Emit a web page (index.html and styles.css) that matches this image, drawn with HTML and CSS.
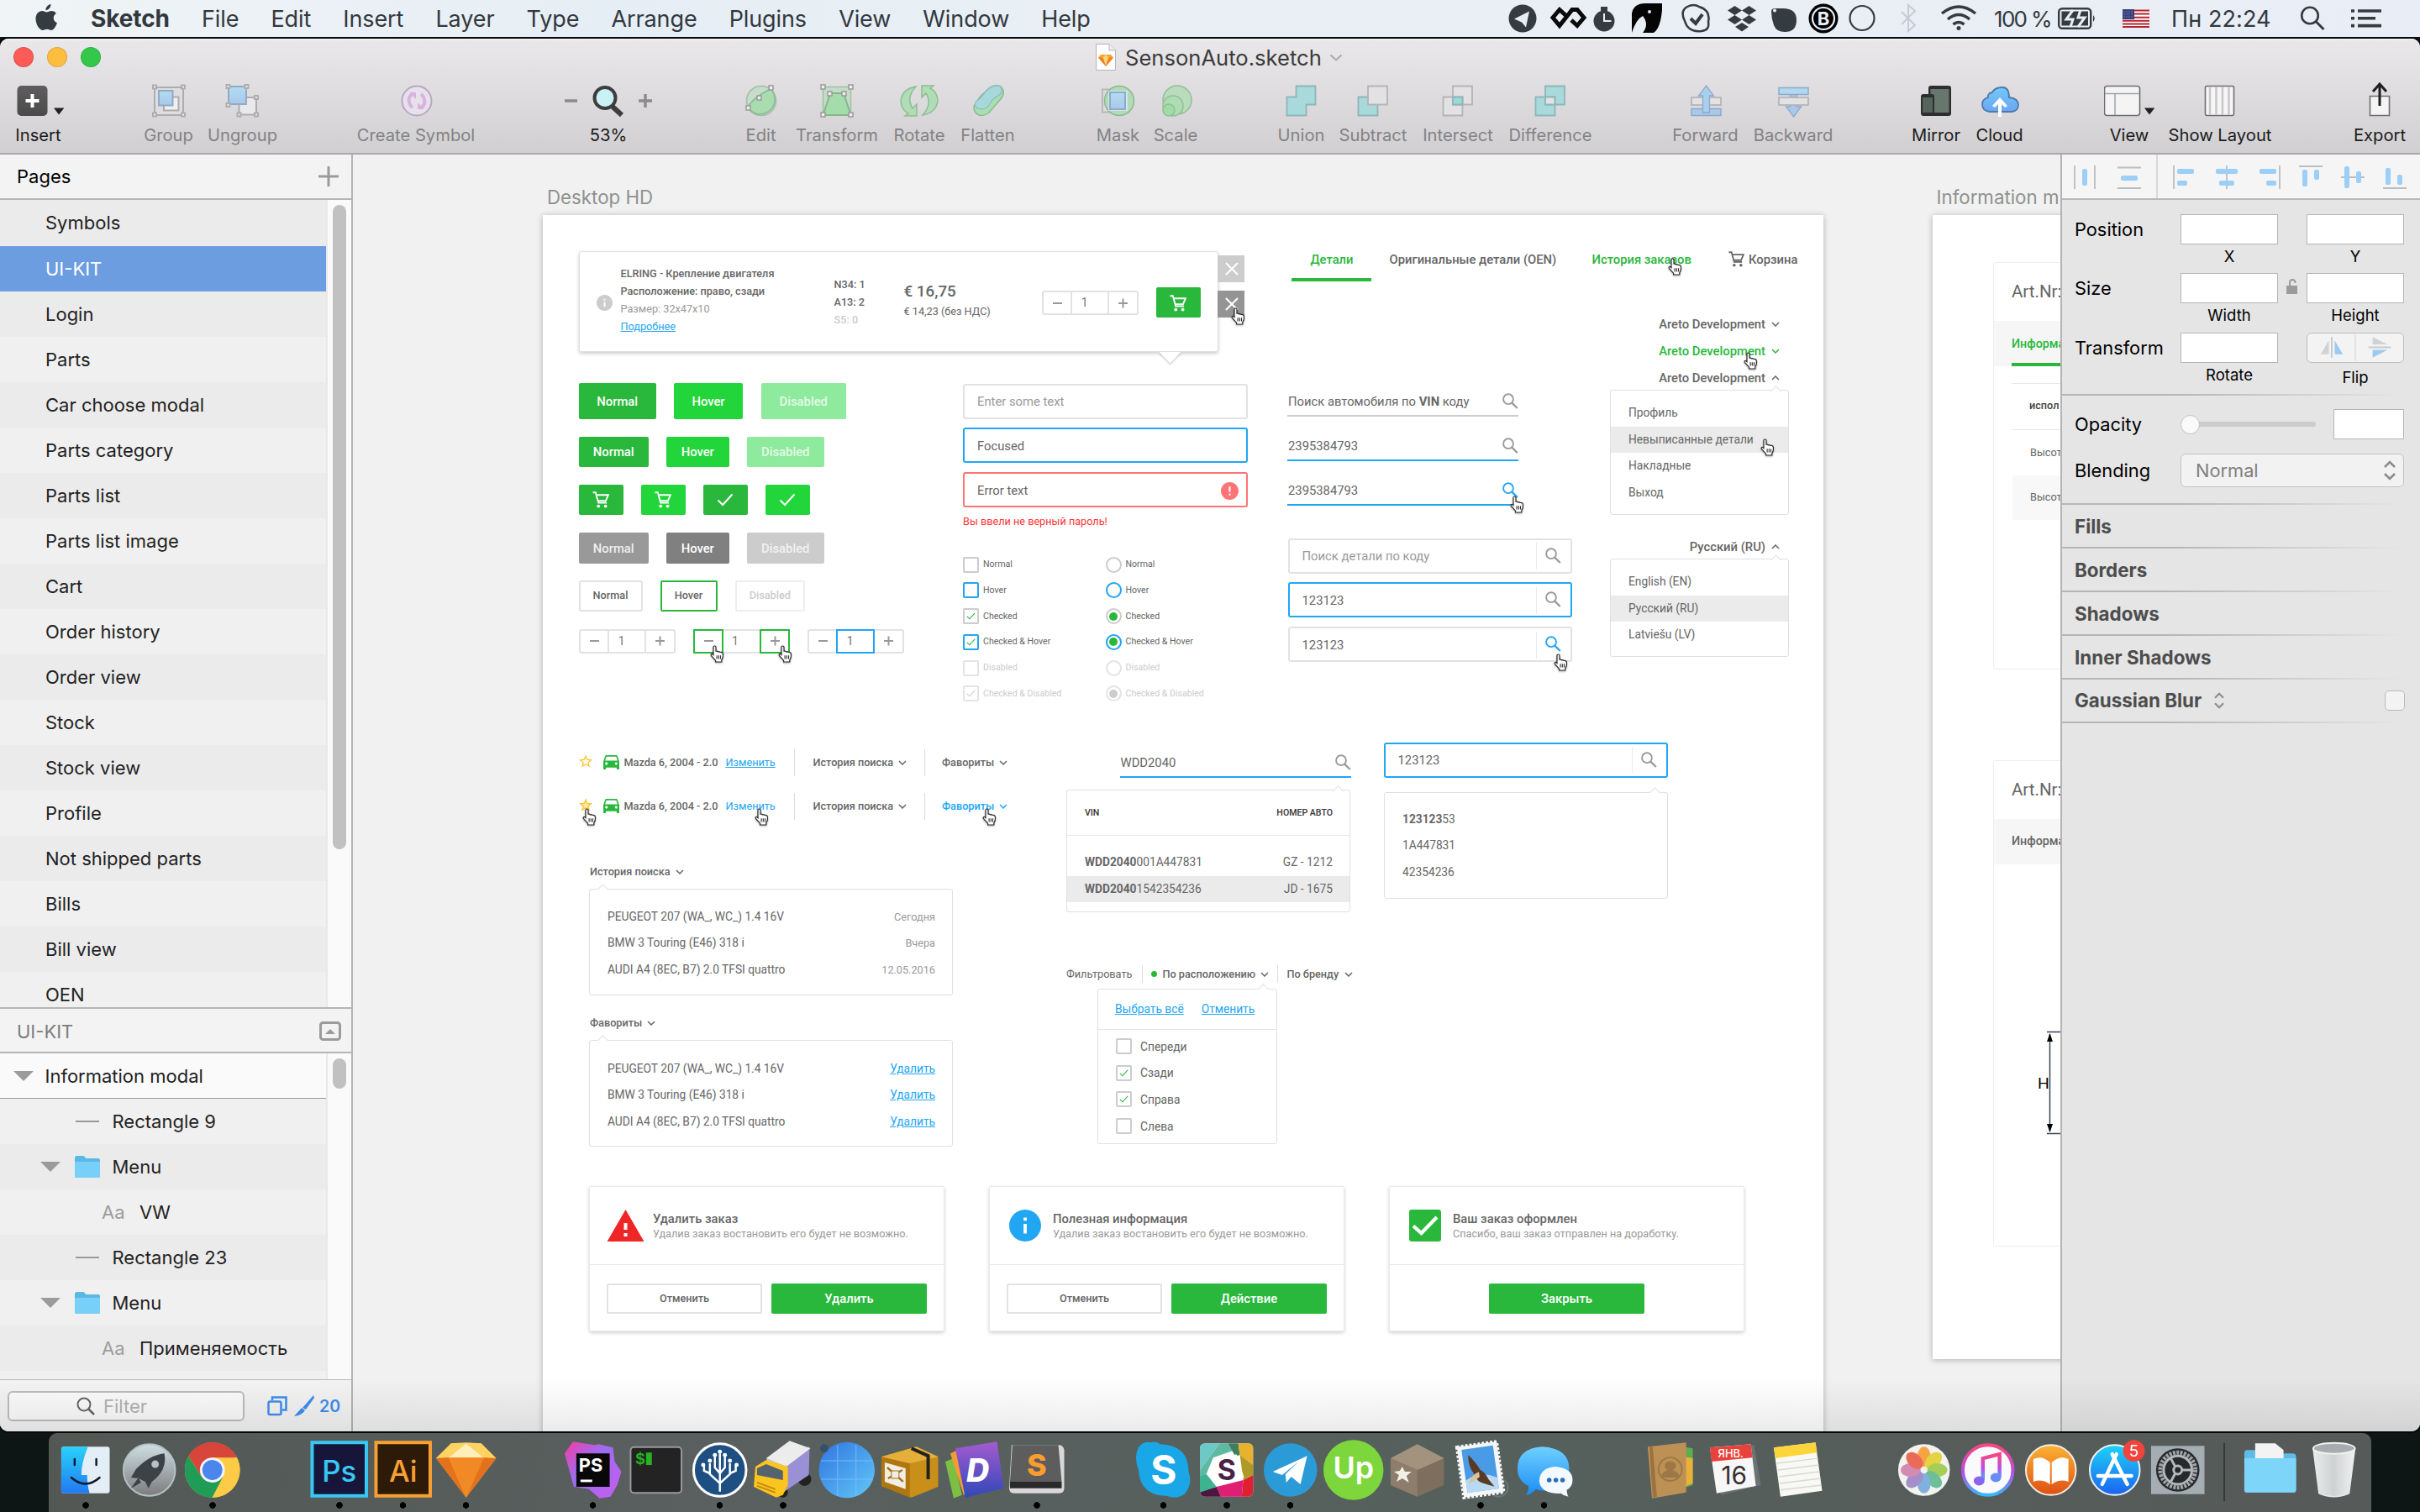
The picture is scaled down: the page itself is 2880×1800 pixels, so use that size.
FILE: index.html
```
<!DOCTYPE html>
<html lang="ru">
<head>
<meta charset="utf-8">
<title>SensonAuto.sketch</title>
<link rel="stylesheet" href="styles.css">
</head>
<body>
<svg class="defs" aria-hidden="true">
  <symbol id="hand" viewBox="0 0 17 21"><path d="M5.4 1c1 0 1.6.7 1.6 1.6v4.6l1.2-.1 1 .7 1.6-.2 1.1.9 1.5-.1c1.3.3 2.1 1.200 2.100 2.500l-.2 3.600-1.500 3.200V20H6.600v-1.800L1.300 12.300c-.7-1.200.6-2.400 1.700-1.600l1 .9V2.600C4 1.700 4.600 1 5.400 1z" fill="#fff" stroke="#2b2b2b" stroke-width="1.200"/><path d="M8.100 12.200v4.200M10.300 12.200v4.200M12.500 12.200v4.200" stroke="#2b2b2b" stroke-width="1.100"/></symbol>
  <symbol id="lens" viewBox="0 0 19 19"><circle cx="7" cy="7.200" r="5.900" fill="none" stroke="currentColor" stroke-width="1.900"/><path d="M11.200 11.600l6.600 6.400" stroke="currentColor" stroke-width="2.300"/></symbol>
  <symbol id="cart" viewBox="0 0 20 20"><path d="M.5 1.300h3.300l3.400 12.300h9.900M4.600 4.300h14.200l-3 7H6.600" fill="none" stroke="currentColor" stroke-width="1.900"/><circle cx="7.200" cy="17.600" r="1.900" fill="currentColor"/><circle cx="15.600" cy="17.600" r="1.900" fill="currentColor"/></symbol>
  <symbol id="tick" viewBox="0 0 20 16"><path d="M1.500 8.500l5.600 5.500L18.500 1.500" fill="none" stroke="currentColor" stroke-width="2"/></symbol>
  <symbol id="down" viewBox="0 0 10 6"><path d="M1 1l4 4 4-4" fill="none" stroke="currentColor" stroke-width="1.500"/></symbol>
  <symbol id="up" viewBox="0 0 10 6"><path d="M1 5l4-4 4 4" fill="none" stroke="currentColor" stroke-width="1.500"/></symbol>
  <symbol id="info" viewBox="2 2 20 20"><path fill="currentColor" d="M12 2C6.480 2 2 6.480 2 12s4.480 10 10 10 10-4.480 10-10S17.520 2 12 2zm1 15h-2v-6h2v6zm0-8h-2V7h2v2z"/></symbol>
  <symbol id="alert" viewBox="2 2 20 20"><path fill="currentColor" d="M12 2C6.480 2 2 6.480 2 12s4.480 10 10 10 10-4.480 10-10S17.520 2 12 2zm1 15h-2v-2h2v2zm0-4h-2V7h2v6z"/></symbol>
  <symbol id="star" viewBox="2 2 20 19"><path fill="#ffc32b" d="M22 9.240l-7.190-.62L12 2 9.190 8.630 2 9.240l5.460 4.730L5.820 21 12 17.270 18.180 21l-1.630-7.030L22 9.240zM12 15.400l-3.760 2.270 1-4.280-3.320-2.880 4.380-.38L12 6.100l1.710 4.040 4.380.38-3.320 2.880 1 4.280L12 15.400z"/></symbol>
  <symbol id="car" viewBox="3 5 18 16"><path fill="#29b83c" d="M18.920 6.010C18.720 5.420 18.160 5 17.500 5h-11c-.66 0-1.210.42-1.420 1.010L3 12v8c0 .55.45 1 1 1h1c.55 0 1-.45 1-1v-1h12v1c0 .55.45 1 1 1h1c.55 0 1-.45 1-1v-8l-2.080-5.990zM6.500 16c-.83 0-1.500-.67-1.500-1.500S5.670 13 6.500 13s1.500.67 1.500 1.500S7.330 16 6.500 16zm11 0c-.83 0-1.500-.67-1.500-1.500s.67-1.500 1.500-1.500 1.500.67 1.500 1.500-.67 1.500-1.500 1.500zM5 11l1.500-4.500h11L19 11H5z"/></symbol>
  <symbol id="folder" viewBox="0 0 30 26"><path d="M0 2.500C0 1 1 0 2.500 0h8l3 3H28c1.200 0 2 .8 2 2v19c0 1-.8 2-2 2H2c-1.200 0-2-1-2-2z" fill="#5bb8e4"/><path d="M0 7h30v17c0 1-.8 2-2 2H2c-1.200 0-2-1-2-2z" fill="#77d0f8"/></symbol>
  <symbol id="updown" viewBox="0 0 16 24"><path d="M2 8l6-6 6 6M2 16l6 6 6-6" fill="none" stroke="#8c8c8c" stroke-width="2.600"/></symbol>
  <linearGradient id="gDark" x2="0" y2="1"><stop stop-color="#5e5e5e"/><stop offset="1" stop-color="#4a4a4a"/></linearGradient>
  <linearGradient id="gBlue" x2="0" y2="1"><stop stop-color="#b3dcf0"/><stop offset="1" stop-color="#a9c8ea"/></linearGradient>
  <linearGradient id="gCloud" x2="0" y2="1"><stop stop-color="#73c8fb"/><stop offset="1" stop-color="#6ba6f2"/></linearGradient>
  <linearGradient id="gSky" x2="0" y2="1"><stop stop-color="#6fd0ff"/><stop offset="1" stop-color="#1b8cf5"/></linearGradient>
  <linearGradient id="gStore" x2="0" y2="1"><stop stop-color="#1ed2f8"/><stop offset="1" stop-color="#1c63ee"/></linearGradient>
  <linearGradient id="gFinder" x2="0" y2="1"><stop stop-color="#2ad2fb"/><stop offset="1" stop-color="#2179f2"/></linearGradient>
  <linearGradient id="gGrey" x2="0" y2="1"><stop stop-color="#cfdfe4"/><stop offset="1" stop-color="#7b7b7c"/></linearGradient>
  <linearGradient id="gOrange" x2="0" y2="1"><stop stop-color="#fdb334"/><stop offset="1" stop-color="#df4f14"/></linearGradient>
  <linearGradient id="gPink" x2="0" y2="1"><stop stop-color="#f8477e"/><stop offset=".55" stop-color="#b94de8"/><stop offset="1" stop-color="#35b9fb"/></linearGradient>
  <linearGradient id="gStorm" x1="0" y1="0" x2="1" y2="1"><stop stop-color="#f73ca5"/><stop offset=".4" stop-color="#9d6cf0"/><stop offset="1" stop-color="#c65df0"/></linearGradient>
  <linearGradient id="gDash" x2="0" y2="1"><stop stop-color="#a45bd0"/><stop offset="1" stop-color="#3048b8"/></linearGradient>
  <linearGradient id="gBall" x2="1" y2="1"><stop stop-color="#2f74e0"/><stop offset="1" stop-color="#62c8f8"/></linearGradient>
  <linearGradient id="gBin" x2="1" y2="0"><stop stop-color="#e9ebec"/><stop offset=".5" stop-color="#cfd2d3"/><stop offset="1" stop-color="#f1f2f2"/></linearGradient>
</svg>

<header class="menubar">
  <svg class="apple" viewBox="0 0 26 32"><path fill="#343b41" d="M18.500 0c.2 3.600-2.600 7-6 7.200C12.100 3.800 15.300.4 18.500 0zM13.500 9.600c1.500 0 3.300-1.600 6-1.600 2.200 0 4.200 1.100 5.400 2.900-4.700 2.900-4 9.300 1 11.300C24.400 26.800 21.700 31 18.900 31c-2 0-2.600-1.200-5-1.200s-3.100 1.200-5 1.200C5.200 31 .5 24 .5 17.500.5 11.500 4.200 8 8 8c2.500 0 4 1.600 5.500 1.600z"/></svg>
  <nav class="menus"><b>Sketch</b><span>File</span><span>Edit</span><span>Insert</span><span>Layer</span><span>Type</span><span>Arrange</span><span>Plugins</span><span>View</span><span>Window</span><span>Help</span></nav>
  <svg class="status-icons" viewBox="1790 0 570 44">
    <circle cx="1812" cy="22" r="16.500" fill="#343b41"/><path d="M1802 22.500l18-9-4 19-5-6z" fill="#e8eef5"/>
    <path d="M1863 18l-7-6.500-8 9.500 8 9.500 15-19 6 0 8 9.500-8 9.500-7-6.500" fill="none" stroke="#0a0a0a" stroke-width="5"/>
    <circle cx="1909" cy="25" r="12.500" fill="#343b41"/><path d="M1905 8h8v5h-8z" fill="#343b41"/><path d="M1909 16v9h8.500" fill="none" stroke="#e8eef5" stroke-width="2"/>
    <path d="M1942 39V16q2-12 16-12h20v8q-2 22-10 27h-13q8-10 0-20-8 4-13 20z" fill="#050505"/><circle cx="1963" cy="14" r="2" fill="#dfe5ea"/>
    <path d="M2008 8q8-4 14 0 14 4 11 18 2 10-8 11-16 2-20-12-6-12 3-17z" fill="none" stroke="#343b41" stroke-width="2.500"/><path d="M2012 22l6 6 8-11" fill="none" stroke="#343b41" stroke-width="4"/>
    <path d="M2064.500 7l8.500 5.500-8.500 5.500-8.500-5.500zM2081.500 7l8.500 5.500-8.500 5.500-8.500-5.500zM2064.500 18l8.500 5.500-8.500 5.500-8.500-5.500zM2081.500 18l8.500 5.500-8.500 5.500-8.500-5.500zM2073 27l8 5-8 5.500-8-5.500z" fill="#343b41"/>
    <path d="M2108 14q0-4 4-4h10q16 0 16 14 0 14-14 14-10 0-13-8-3-8-3-16z" fill="#343b41"/><circle cx="2112" cy="12.500" r="2" fill="#e8eef5"/>
    <circle cx="2170" cy="22" r="17.500" fill="#000"/><circle cx="2170" cy="22" r="13" fill="none" stroke="#e8eef5" stroke-width="2.200"/><text x="2170" y="30" text-anchor="middle" class="bolt">B</text>
    <circle cx="2216" cy="21.500" r="14.500" fill="none" stroke="#343b41" stroke-width="2.200"/>
    <path d="M2263 14l16 16-8 7V6l8 7-16 16" fill="none" stroke="#c3ccd4" stroke-width="2"/>
    <path d="M2311 16q20-16 40 0M2318 23q13-11 26 0M2324.500 29q6.500-5 13 0" fill="none" stroke="#343b41" stroke-width="3.500"/><circle cx="2331" cy="33.500" r="2.500" fill="#343b41"/>
  </svg>
  <span class="percent">100 %</span>
  <svg class="battery" viewBox="0 0 46 26"><rect x="1.200" y="1.200" width="38" height="23.600" rx="4" fill="none" stroke="#343b41" stroke-width="2.400"/><rect x="4.500" y="4.500" width="31.500" height="17" fill="#343b41"/><path d="M42 9q3.500 4 0 8z" fill="#343b41"/><path d="M18 3l-8 11h8l-3 9M27 3l-3 9h8l-8 11" fill="none" stroke="#e8eef5" stroke-width="3"/></svg>
  <svg class="flag" viewBox="0 0 32 22"><path fill="#fff" d="M0 0h32v22H0z"/><path d="M0 1.500h32M0 5.600h32M0 9.700h32M0 13.800h32M0 17.500h32M0 21h32" stroke="#b3222e" stroke-width="2"/><path fill="#37407c" d="M0 0h14v12H0z"/><path d="M1.500 3h12M1.500 6h12M1.500 9h12" stroke="#aab" stroke-width="1" stroke-dasharray="1 2"/></svg>
  <span class="clock">Пн 22:24</span>
  <svg class="spot" viewBox="0 0 30 30"><circle cx="12" cy="11.500" r="9.800" fill="none" stroke="#343b41" stroke-width="2.600"/><path d="M19 18.500l9.500 9.500" stroke="#343b41" stroke-width="3"/></svg>
  <svg class="list" viewBox="0 0 36 22"><path d="M0 2h4M8 2h28M0 10.800h4M8 10.800h21M0 19.600h4M8 19.600h28" stroke="#343b41" stroke-width="3.600"/></svg>
</header>

<main class="window">
  <div class="titlebar">
    <i class="light red"></i><i class="light amber"></i><i class="light green"></i>
    <div class="doc-title">
      <svg class="doc" viewBox="0 0 24 32"><path d="M.5.500H16L23.500 8v23.500H.5z" fill="#fff" stroke="#b5b5b5"/><path d="M16 .500V8h7.500" fill="#eee" stroke="#b5b5b5"/><path d="M6 13h12l3 3.500L12 27l-9-10.500z" fill="#f9a72b"/><path d="M3 16.500h18L12 27z" fill="#ee7d20"/><path d="M8.500 16.500L12 13l3.500 3.500L12 26z" fill="#fdd47c"/></svg>
      <span>SensonAuto.sketch</span>
      <svg class="doc-chev" viewBox="0 0 16 9"><path d="M1.500 1.500L8 7.500l6.500-6" fill="none" stroke="#aaa" stroke-width="2"/></svg>
    </div>
  </div>

  <div class="toolbar">
    <div class="tool on t-insert"><svg viewBox="-30 -24 60 48"><rect x="-25.500" y="-18" width="36" height="36" rx="5" fill="url(#gDark)"/><path d="M-7.500-8V8M-15.500 0H.5" stroke="#fff" stroke-width="4"/><path d="M18 8.500h12.500L24 16.500z" fill="#222"/></svg><span>Insert</span></div>
    <div class="tool t-group"><svg viewBox="-30 -24 60 48"><g fill="#dedddf" stroke="#adadaf" stroke-width="2"><path d="M-17-16h34v33h-34z"/><path d="M-6-4.500h17.500v16H-6z" fill="#efefef"/><path d="M-12-12h16.500V5.500H-12z" fill="url(#gBlue)" stroke="#8fabc6"/><path d="M-19-18.500h4v4h-4zM15-18.500h4v4h-4zM-19 14.500h4v4h-4zM15 14.500h4v4h-4z" fill="#eee"/></g></svg><span>Group</span></div>
    <div class="tool t-ungroup"><svg viewBox="-30 -24 60 48"><g fill="#e9e8ea" stroke="#adadaf" stroke-width="2"><path d="M-4.500-4H16v20.500H-4.500z"/><path d="M-17-17H4V4h-21z" fill="url(#gBlue)" stroke="#8fabc6"/><path d="M-19.500-19h4v4h-4zM2.500-19h4v4h-4zM-19.500 3h4v4h-4zM14-6h4v4h-4zM14 14.500h4v4h-4zM-6.500 14.500h4v4h-4z" fill="#eee"/></g></svg><span>Ungroup</span></div>
    <div class="tool t-symbol"><svg viewBox="-30 -24 60 48"><circle cx="1" r="17.500" fill="#e7e2e9" stroke="#baa6c4" stroke-width="2"/><path d="M-3-9Q-10-5-8 2q1 4 4 6M5 9Q12 5 10-2 9-6 6-8" fill="none" stroke="#d9b2e3" stroke-width="4"/><path d="M-8-10h8v8zM10 10H2V2z" fill="#d9b2e3"/></svg><span>Create Symbol</span></div>
    <div class="tool on t-zoom"><svg viewBox="-52 -24 104 48"><path d="M-52 0h15M36 0h16M44-8V8" stroke="#8b8a8c" stroke-width="3.500"/><path d="M5 7l11 10" stroke="#3d3d3d" stroke-width="6"/><circle cx="-4" cy="-3.500" r="12.500" fill="#c9f1f6" stroke="#3d3d3d" stroke-width="4"/></svg><span>53%</span></div>
    <div class="tool t-edit"><svg viewBox="-30 -24 60 48"><circle r="17.500" fill="#c8dccb" stroke="#9dbfa3" stroke-width="1.500"/><path d="M11-14Q-10-4-16 8A17.500 17.500 0 1 0 11-14z" fill="#a9dcae" stroke="#8bb893" stroke-width="1.500"/><path d="M9-18h5v5H9zM-5-6h5v5h-5zM-18 6h5v5h-5z" fill="#eee" stroke="#9a9a9a" stroke-width="1.500"/></svg><span>Edit</span></div>
    <div class="tool t-transform"><svg viewBox="-30 -24 60 48"><path d="M-16.500-16.500h33v33h-33z" fill="#c5dcc8" stroke="#9fc0a4" stroke-width="1.500"/><path d="M-8-9H8l8.500 26h-33z" fill="#a5dcab" stroke="#86b58d" stroke-width="2"/><path d="M-19-19h5v5h-5zM14-19h5v5h-5zM-19 14h5v5h-5zM14 14h5v5h-5zM-11-11h5v5h-5zM6-11h5v5H6z" fill="#eee" stroke="#9a9a9a" stroke-width="1.500"/></svg><span>Transform</span></div>
    <div class="tool t-rotate"><svg viewBox="-30 -24 60 48"><path d="M-4-17q-17 3-18 18Q-21 11-13 15l-4 3H-3V4l-5 5Q-16-4-4-17zM4 17Q21 14 22-1 21-11 13-15l4-3H3v14l5-5Q16 4 4 17z" fill="#b0ddb6" stroke="#8dbd95" stroke-width="1.500"/></svg><span>Rotate</span></div>
    <div class="tool t-flatten"><svg viewBox="-30 -24 60 48"><path d="M-3-11Q6-21 15-17q7 7-1 16L1 14q-10 7-16 0-5-7 2-13Q-12-4-3-11z" fill="#a9dfb0" stroke="#8abb92" stroke-width="1.500"/><path d="M-3-11Q6-21 15-17q4 8-5 12-6 4-8 9-5 8-15 5-5-4-1-9 5-2 11-11z" fill="#a6d8dc" stroke="#8fb9bf" stroke-width="1.200"/></svg><span>Flatten</span></div>
    <div class="tool t-mask"><svg viewBox="-30 -24 60 48"><path d="M-19-13.500h29v27h-29z" fill="#dcdcdc" stroke="#b9b9b9" stroke-width="2"/><circle cx="1" r="17.500" fill="#b0dcb4" stroke="#90b796" stroke-width="1.500"/><path d="M-12-12H11v24h-23z" fill="#d5e3ea"/><path d="M-10-10H8v20h-18z" fill="url(#gBlue)" stroke="#8fa9d0" stroke-width="2"/></svg><span>Mask</span></div>
    <div class="tool t-scale"><svg viewBox="-30 -24 60 48"><g fill="#b9dcbd" stroke="#93bd99" stroke-width="1.500"><circle cx="2" cy="-1" r="17"/><circle cx="-3" cy="6" r="12" fill="#aedcb3"/><circle cx="-8" cy="11" r="7" fill="#a0dba6"/></g></svg><span>Scale</span></div>
    <div class="tool t-union"><svg viewBox="-30 -24 60 48"><path d="M-6.500-17.500h23v22h-11v13h-23v-22h11z" fill="#a9dadb" stroke="#8fb5ba" stroke-width="1.800"/></svg><span>Union</span></div>
    <div class="tool t-subtract"><svg viewBox="-30 -24 60 48"><path d="M-17.500-4.500h23v22h-23z" fill="#a9dadb" stroke="#8fb5ba" stroke-width="1.800"/><path d="M-6-17.500h23v22H-6z" fill="#e2e1e3" stroke="#b4b4b6" stroke-width="1.800"/></svg><span>Subtract</span></div>
    <div class="tool t-intersect"><svg viewBox="-30 -24 60 48"><g fill="#e2e1e3" stroke="#b4b4b6" stroke-width="1.800"><path d="M-6-17.500h23v22H-6zM-17.500-4.500h23v22h-23z"/><path d="M-6-4.500H5.500v9H-6z" fill="#9dd8da" stroke="#8fb5ba"/></g></svg><span>Intersect</span></div>
    <div class="tool t-difference"><svg viewBox="-30 -24 60 48"><path d="M-6-17.500h23v22H-6zM-17.500-4.500h23v22h-23z" fill="#a9dadb" stroke="#8fb5ba" stroke-width="1.800"/><path d="M-6-4.500H5.500v9H-6z" fill="#e2e1e3" stroke="#8fb5ba" stroke-width="1.800"/></svg><span>Difference</span></div>
    <div class="tool t-forward"><svg viewBox="-30 -24 60 48"><path d="M-17 9.500h35v8h-35z" fill="#a9c8ea" stroke="#8fa9cb" stroke-width="1.500"/><path d="M-17-4h35v9h-35z" fill="#e2e1e3" stroke="#adadaf" stroke-width="1.500"/><path d="M.5-18l9 12h-5v20h-8V-6h-5z" fill="#a9cfee" stroke="#8fa9cb" stroke-width="1.300"/></svg><span>Forward</span></div>
    <div class="tool t-backward"><svg viewBox="-30 -24 60 48"><path d="M.5 19l9-12h-5v-20h-8V7h-5z" fill="#a9c8ea" stroke="#8fa9cb" stroke-width="1.300"/><path d="M-17-15.500h35v8h-35z" fill="#b0d8ee" stroke="#8fa9cb" stroke-width="1.500"/><path d="M-17-4h35v9h-35z" fill="#e2e1e3" stroke="#adadaf" stroke-width="1.500"/></svg><span>Backward</span></div>
    <div class="tool on t-mirror"><svg viewBox="-30 -24 60 48"><rect x="-9" y="-18" width="27" height="36" rx="3" fill="#2e2e2e"/><path d="M-6.500-14h22v28h-22z" fill="#67776e"/><rect x="-18" y="-8" width="16" height="26" rx="3" fill="#2e2e2e"/><path d="M-16-4h12v18h-12z" fill="#55655c"/></svg><span>Mirror</span></div>
    <div class="tool on t-cloud"><svg viewBox="-30 -24 60 48"><path d="M-12 13q-9-1-9-9 0-6 7-8-1-5 5-6Q-6-16 3-16q8 0 8 12 11 1 11 9 0 7-8 8z" fill="url(#gCloud)" stroke="#4d79ad" stroke-width="1.800"/><path d="M0-4l9 10-3 2-4-4v15h-4V4l-4 4-3-2z" fill="#fff"/></svg><span>Cloud</span></div>
    <div class="tool on t-view"><svg viewBox="-30 -24 60 48"><rect x="-29.500" y="-17.500" width="42" height="35" rx="3" fill="#f4f4f4" stroke="#6e6e6e" stroke-width="1.600"/><path d="M-29-8.500h41M-17-8v25" stroke="#9aa4ac" stroke-width="1.500"/><path d="M18 8.500h12.500L24 16.500z" fill="#222"/></svg><span>View</span></div>
    <div class="tool on t-layout"><svg viewBox="-30 -24 60 48"><rect x="-17.500" y="-17.500" width="34" height="35" rx="2" fill="#f6f6f6" stroke="#6e6e6e" stroke-width="1.600"/><path d="M-12-17v34M-4.500-17v34M3-17v34M10.500-17v34" stroke="#c9c9c9" stroke-width="2.600"/></svg><span>Show Layout</span></div>
    <div class="tool on t-export"><svg viewBox="-30 -24 60 48"><path d="M-11.500-5.500h23v23h-23z" fill="#f4f4f4" stroke="#6e6e6e" stroke-width="1.600"/><path d="M0 6v-24M-8-11l8-9 8 9" fill="none" stroke="#1f1f1f" stroke-width="3"/></svg><span>Export</span></div>
  </div>

  <div class="body">
    <aside class="sidebar">
      <div class="head"><span>Pages</span><svg viewBox="0 0 24 24"><path d="M0 12h24M12 0v24" stroke="#9b9b9b" stroke-width="3"/></svg></div>
      <div class="scroller pages">
        <ul><li>Symbols</li><li class="sel">UI-KIT</li><li>Login</li><li>Parts</li><li>Car choose modal</li><li>Parts category</li><li>Parts list</li><li>Parts list image</li><li>Cart</li><li>Order history</li><li>Order view</li><li>Stock</li><li>Stock view</li><li>Profile</li><li>Not shipped parts</li><li>Bills</li><li>Bill view</li><li>OEN</li></ul>
        <div class="track"><i></i></div>
      </div>
      <div class="head dim"><span>UI-KIT</span><svg class="collapse" viewBox="0 0 26 23"><rect x="1.500" y="1.500" width="23" height="20" rx="3" fill="none" stroke="#9b9b9b" stroke-width="3"/><path d="M7 15l6-6 6 6z" fill="#9b9b9b"/></svg></div>
      <div class="scroller layers">
        <ul>
          <li class="root"><i class="tri"></i>Information modal</li>
          <li class="l1"><i class="rule"></i>Rectangle 9</li>
          <li class="l1 dir"><i class="tri"></i><svg><use href="#folder"/></svg>Menu</li>
          <li class="l2"><em>Aa</em>VW</li>
          <li class="l1"><i class="rule"></i>Rectangle 23</li>
          <li class="l1 dir"><i class="tri"></i><svg><use href="#folder"/></svg>Menu</li>
          <li class="l2"><em>Aa</em>Применяемость</li>
          <li></li>
        </ul>
        <div class="track"><i></i></div>
      </div>
      <div class="foot">
        <div class="filter"><svg viewBox="0 0 22 22"><circle cx="9" cy="9" r="7.500" fill="none" stroke="#666" stroke-width="2"/><path d="M14.500 14.500l6.500 6.500" stroke="#666" stroke-width="2.500"/></svg>Filter</div>
        <svg class="copies" viewBox="0 0 24 24"><path d="M6 5V1.500h16.500v15H18" fill="none" stroke="#3e8ef0" stroke-width="2.500"/><rect x="1.500" y="6.500" width="15" height="15.500" rx="2" fill="none" stroke="#3e8ef0" stroke-width="2.500"/></svg>
        <svg class="knife" viewBox="0 0 24 26"><path d="M23 0l1 3-10 14-4-2zM9 15l4 3q-4 6-13 7z" fill="#3e8ef0"/></svg>
        <b>20</b>
      </div>
    </aside>

    <section class="canvas"><div class="layer">
      <h2 class="ab-name n1">Desktop HD</h2>
      <div class="artboard ab1"></div>
      <h2 class="ab-name n2">Information m</h2>
      <div class="artboard ab2"></div>

      <div class="product">
        <svg class="p-info"><use href="#info"/></svg>
        <div class="p-text m"><span>ELRING - Крепление двигателя</span><span>Расположение: право, сзади</span><span class="lite">Размер: 32x47x10</span><a>Подробнее</a></div>
        <div class="p-stock m"><span>N34: 1</span><span>A13: 2</span><span class="off">S5: 0</span></div>
        <div class="p-price"><b>€ 16,75</b><span>€ 14,23 (без НДС)</span></div>
        <div class="stepper"><i class="minus"></i><span>1</span><i class="plus"></i></div>
        <div class="btn icon"><svg><use href="#cart"/></svg></div>
      </div>
      <div class="close x1"><i></i></div>
      <div class="close x2"><i></i></div>

      <div class="row r1"><div class="btn w92">Normal</div><div class="btn hov w82">Hover</div><div class="btn dis w100">Disabled</div></div>
      <div class="row r2"><div class="btn w84">Normal</div><div class="btn hov w74">Hover</div><div class="btn dis w92">Disabled</div></div>
      <div class="row r3"><div class="btn icon"><svg><use href="#cart"/></svg></div><div class="btn hov icon"><svg><use href="#cart"/></svg></div><div class="btn icon"><svg class="tk"><use href="#tick"/></svg></div><div class="btn hov icon"><svg class="tk"><use href="#tick"/></svg></div></div>
      <div class="row r4"><div class="btn g1 w84">Normal</div><div class="btn g2 w74">Hover</div><div class="btn g3 w92">Disabled</div></div>
      <div class="row r5"><div class="btn line w76">Normal</div><div class="btn line act w68">Hover</div><div class="btn line fade w84">Disabled</div></div>
      <div class="row r6">
        <div class="stepper"><i class="minus"></i><span>1</span><i class="plus"></i></div>
        <div class="stepper both"><i class="minus"></i><span>1</span><i class="plus"></i></div>
        <div class="stepper edit"><i class="minus"></i><span>1</span><i class="plus"></i></div>
      </div>

      <div class="field f1 ph">Enter some text</div>
      <div class="field f2 focus">Focused</div>
      <div class="field f3 err">Error text<svg><use href="#alert"/></svg></div>
      <div class="t err-msg">Вы ввели не верный пароль!</div>

      <div class="checks c-box"><span><i></i>Normal</span><span class="h"><i></i>Hover</span><span><i><svg><use href="#tick"/></svg></i>Checked</span><span class="h"><i><svg><use href="#tick"/></svg></i>Checked &amp; Hover</span><span class="d"><i></i>Disabled</span><span class="d"><i><svg><use href="#tick"/></svg></i>Checked &amp; Disabled</span></div>
      <div class="checks c-radio"><span><i></i>Normal</span><span class="h"><i></i>Hover</span><span class="k"><i></i>Checked</span><span class="h k"><i></i>Checked &amp; Hover</span><span class="d"><i></i>Disabled</span><span class="d k"><i></i>Checked &amp; Disabled</span></div>

      <div class="tabs m"><span class="on">Детали</span><span>Оригинальные детали (OEN)</span><span class="green">История заказов</span><span class="basket"><svg><use href="#cart"/></svg>Корзина</span></div>

      <div class="account a1 m">Areto Development<svg><use href="#down"/></svg></div>
      <div class="account a2 m green">Areto Development<svg><use href="#down"/></svg></div>
      <div class="account a3 m">Areto Development<svg><use href="#up"/></svg></div>
      <div class="pop menu m1"><span>Профиль</span><span class="hl">Невыписанные детали</span><span>Накладные</span><span>Выход</span></div>
      <div class="account a4 m">Русский (RU)<svg><use href="#up"/></svg></div>
      <div class="pop menu m2"><span>English (EN)</span><span class="hl">Русский (RU)</span><span>Latviešu (LV)</span></div>

      <div class="under u1"><span>Поиск автомобиля по <b>VIN</b> коду</span><svg><use href="#lens"/></svg></div>
      <div class="under u2 focus"><span>2395384793</span><svg><use href="#lens"/></svg></div>
      <div class="under u3 focus hot"><span>2395384793</span><svg><use href="#lens"/></svg></div>
      <div class="under u4 focus"><span>WDD2040</span><svg><use href="#lens"/></svg></div>

      <div class="field search s1 ph">Поиск детали по коду<i><svg><use href="#lens"/></svg></i></div>
      <div class="field search s2 focus">123123<i><svg><use href="#lens"/></svg></i></div>
      <div class="field search s3">123123<i class="hot"><svg><use href="#lens"/></svg></i></div>
      <div class="field search s4 focus">123123<i><svg><use href="#lens"/></svg></i></div>

      <div class="carbar b1 m"><svg class="st"><use href="#star"/></svg><svg class="cr"><use href="#car"/></svg><span class="nm">Mazda 6, 2004 - 2.0</span><a>Изменить</a><span class="dd">История поиска<svg><use href="#down"/></svg></span><span class="dd">Фавориты<svg><use href="#down"/></svg></span></div>
      <div class="carbar b2 m"><svg class="st"><path d="M8 2.500l2 4.200 4.600.4-3.600 3.200 1 4.500-4-2.400-4 2.400 1-4.500L1.500 7.100l4.500-.4z" fill="#ffe7a6"/><use href="#star"/></svg><svg class="cr"><use href="#car"/></svg><span class="nm">Mazda 6, 2004 - 2.0</span><a>Изменить</a><span class="dd">История поиска<svg><use href="#down"/></svg></span><span class="dd blue">Фавориты<svg><use href="#down"/></svg></span></div>

      <div class="t m drop d1">История поиска<svg><use href="#down"/></svg></div>
      <div class="pop hist h1"><p>PEUGEOT 207 (WA_, WC_) 1.4 16V<small>Сегодня</small></p><p>BMW 3 Touring (E46) 318 i<small>Вчера</small></p><p>AUDI A4 (8EC, B7) 2.0 TFSI quattro<small>12.05.2016</small></p></div>
      <div class="t m drop d2">Фавориты<svg><use href="#down"/></svg></div>
      <div class="pop hist h2"><p>PEUGEOT 207 (WA_, WC_) 1.4 16V<a>Удалить</a></p><p>BMW 3 Touring (E46) 318 i<a>Удалить</a></p><p>AUDI A4 (8EC, B7) 2.0 TFSI quattro<a>Удалить</a></p></div>

      <div class="pop vin"><p class="th"><span>VIN</span><span>НОМЕР АВТО</span></p><p><span><b>WDD2040</b>001A447831</span><span>GZ - 1212</span></p><p class="hl"><span><b>WDD2040</b>1542354236</span><span>JD - 1675</span></p></div>
      <div class="pop codes"><p><b>123123</b>53</p><p>1A447831</p><p>42354236</p></div>

      <div class="filters"><span>Фильтровать</span><span class="m dot">По расположению<svg><use href="#down"/></svg></span><span class="m">По бренду<svg><use href="#down"/></svg></span></div>
      <div class="pop where"><div class="acts"><a>Выбрать всё</a><a>Отменить</a></div><div class="opts"><span><i></i>Спереди</span><span><i><svg><use href="#tick"/></svg></i>Сзади</span><span><i><svg><use href="#tick"/></svg></i>Справа</span><span><i></i>Слева</span></div></div>

      <div class="dialog g-a"><div class="say"><svg class="warn" viewBox="1 2 22 19"><path fill="#ef2626" d="M1 21h22L12 2 1 21zm12-3h-2v-2h2v2zm0-4h-2v-4h2v4z"/></svg><p><b>Удалить заказ</b>Удалив заказ востановить его будет не возможно.</p></div><div class="acts"><div class="btn line">Отменить</div><div class="btn">Удалить</div></div></div>
      <div class="dialog g-b"><div class="say"><svg class="inf"><use href="#info"/></svg><p><b>Полезная информация</b>Удалив заказ востановить его будет не возможно.</p></div><div class="acts"><div class="btn line">Отменить</div><div class="btn">Действие</div></div></div>
      <div class="dialog g-c"><div class="say"><svg viewBox="0 0 38 38"><rect width="38" height="38" rx="3" fill="#29b83c"/><path d="M5 19.500l9.500 8.500L33 9" fill="none" stroke="#fff" stroke-width="4.200"/></svg><p><b>Ваш заказ оформлен</b>Спасибо, ваш заказ отправлен на доработку.</p></div><div class="acts"><div class="btn">Закрыть</div></div></div>

      <div class="modal o1"><h3>Art.Nr:</h3><div class="tab on m">Информа</div><p class="key m">испол</p><p>Высот</p><p class="alt">Высот</p></div>
      <div class="modal o2"><h3>Art.Nr:</h3><div class="tab m">Информа</div>
        <svg class="dim-h" viewBox="0 0 40 124"><path d="M16 1.500h24M16 122.500h24M19.500 4v116" stroke="#3c4450" stroke-width="1.500"/><path d="M19.500 3l3.500 10h-7zM19.500 121l3.500-10h-7z" fill="#000"/><text x="5" y="69" class="dim-t">H</text></svg></div>

      <svg class="hand k1"><use href="#hand"/></svg><svg class="hand k2"><use href="#hand"/></svg><svg class="hand k3"><use href="#hand"/></svg><svg class="hand k4"><use href="#hand"/></svg><svg class="hand k5"><use href="#hand"/></svg><svg class="hand k6"><use href="#hand"/></svg><svg class="hand k7"><use href="#hand"/></svg><svg class="hand k8"><use href="#hand"/></svg><svg class="hand k9"><use href="#hand"/></svg><svg class="hand k10"><use href="#hand"/></svg><svg class="hand k11"><use href="#hand"/></svg>
    </div></section>

    <aside class="inspector">
      <div class="align">
        <svg viewBox="2454 184 426 52"><g stroke="#bdbdbd" stroke-width="1.800" fill="none"><path d="M2469 197v28M2493 197v28M2520 199.500h28M2520 224h28M2587 197v28M2650 197v28M2713 197v28M2736 198h28M2786 211h28M2836 224h28"/><path d="M2567 184v52" stroke="#d5d5d5"/></g><g fill="#9bcff8"><rect x="2478" y="201" width="6" height="20" rx="2"/><rect x="2524" y="209" width="20" height="6" rx="2"/><rect x="2591" y="201" width="20" height="6" rx="2"/><rect x="2591" y="215" width="12" height="6" rx="2"/><rect x="2637" y="201" width="26" height="6" rx="2"/><rect x="2641" y="215" width="18" height="6" rx="2"/><rect x="2689" y="201" width="20" height="6" rx="2"/><rect x="2697" y="215" width="12" height="6" rx="2"/><rect x="2740" y="202" width="6" height="20" rx="2"/><rect x="2754" y="202" width="6" height="12" rx="2"/><rect x="2790" y="198" width="6" height="26" rx="2"/><rect x="2804" y="204" width="6" height="14" rx="2"/><rect x="2839" y="200" width="6" height="20" rx="2"/><rect x="2853" y="208" width="6" height="12" rx="2"/></g></svg>
      </div>
      <div class="props">
        <label>Position</label><div><i class="in"></i><small>X</small></div><span></span><div><i class="in"></i><small>Y</small></div>
        <label>Size</label><div><i class="in"></i><small>Width</small></div><svg class="lock" viewBox="0 0 13 18"><path d="M0 8h13v10H0z" fill="#9b9b9b"/><path d="M4 8V4.500Q4 1 7 1q3.500 0 3.500 3v1" fill="none" stroke="#9b9b9b" stroke-width="2"/></svg><div><i class="in"></i><small>Height</small></div>
        <label>Transform</label><div><i class="in"></i><small>Rotate</small></div><span></span><div><i class="flip"><svg viewBox="0 0 116 34"><path d="M26 8v17H16zM79 4v9h18z" fill="#d2d2d2"/><path d="M29.500 4v25M74 16.500h27" stroke="#c9c9c9" stroke-width="2"/><path d="M58 1v32" stroke="#ddd" stroke-width="1.500"/><path d="M33 8v17h10zM79 19.500h18l-18 9.500z" fill="#9bcbf2"/></svg></i><small class="low">Flip</small></div>
      </div>
      <div class="blend">
        <div class="opacity"><label>Opacity</label><div class="slider"><i></i></div><i class="in"></i></div>
        <div class="mode"><label>Blending</label><div class="select">Normal<svg><use href="#updown"/></svg></div></div>
      </div>
      <div class="sect">Fills</div><div class="sect">Borders</div><div class="sect">Shadows</div><div class="sect">Inner Shadows</div><div class="sect last">Gaussian Blur<svg><use href="#updown"/></svg><i></i></div>
    </aside>
  </div>
</main>

<footer class="dock">
  <svg class="run" viewBox="-38 -44 76 94"><rect x="-29" y="-28" width="58" height="56" rx="3" fill="#e4eef7"/><path d="M-26-28H3Q-5-8-5 6h7q0 12 3 22h-31q-3 0-3-3v-50q0-3 3-3z" fill="url(#gFinder)"/><path d="M-13-13v7M13-13v7M-17 9Q0 24 17 9" fill="none" stroke="#0c1c2c" stroke-width="2.500" stroke-linecap="round"/></svg>
  <svg viewBox="-38 -44 76 94"><circle r="31" fill="url(#gGrey)" stroke="#b4c2c6" stroke-width="2"/><path d="M18-20Q22 0 3 14l-4 8-4-8-8-4-9-1 6-10Q0-18 18-20zM-13 9l-9 13 12-7z" fill="#3d4246"/><circle cx="7" cy="-7" r="4.500" fill="#b7c2c6"/></svg>
  <svg class="run" viewBox="-38 -44 76 94"><circle r="33" fill="#fcc934"/><path d="M0 0L-28.600-16.500A33 33 0 0 1 28.600-16.500z" fill="#d8453b"/><path d="M0-15h29.500A33 33 0 0 0-28.600-16.500L-13 8z" fill="#d8453b"/><path d="M-28.600-16.500A33 33 0 0 0 0 33L13 8-13 8z" fill="#1f9d57"/><path d="M0 33A33 33 0 0 0 29.500-15H0L13 8z" fill="#fdcb45"/><circle r="15" fill="#f4f4f4"/><circle r="12" fill="#4a86ee"/></svg>
  <span></span>
  <svg class="run" viewBox="-38 -44 76 94"><path d="M-32.500-33h65v64h-65z" fill="#17163a" stroke="#37c8f4" stroke-width="4"/><text y="14" class="ad ps">Ps</text></svg>
  <svg class="run" viewBox="-38 -44 76 94"><path d="M-32.500-33h65v64h-65z" fill="#2d1a08" stroke="#f8a032" stroke-width="4"/><text y="14" class="ad ai">Ai</text></svg>
  <svg class="run" viewBox="-38 -44 76 94"><path d="M-18-32h36l18 18L0 33-36-14z" fill="#f5a12b"/><path d="M-18-32L0-33l18 1 18 18-15-1L0-32l-21 17-15 1z" fill="#fed362"/><path d="M0-32l21 17h-42z" fill="#fff0bb"/><path d="M-36-14L-21-15 0 33zM36-14L21-15 0 33z" fill="#e4721c"/><path d="M-21-15h42L0 33z" fill="#f18a25"/></svg>
  <span></span>
  <svg class="run" viewBox="-38 -44 76 94"><path d="M-24-34L2-30l5-1 17 4 2 17 8 12-5 16-8 14-13 2L-5 23l-18-3-11-40z" fill="url(#gStorm)"/><path d="M-20-20h40v40h-40z" fill="#080808"/><text x="-17" y="2" class="storm">PS</text><path d="M-15 13h14" stroke="#fff" stroke-width="3"/></svg>
  <svg viewBox="-38 -44 76 94"><rect x="-30.500" y="-27.500" width="61" height="55" rx="4" fill="#232323" stroke="#9a9a9a" stroke-width="2"/><text x="-25" y="-7" class="term">$</text><path d="M-12-21h7v15h-7z" fill="#25b31f"/></svg>
  <svg class="run" viewBox="-38 -44 76 94"><circle r="31.500" fill="#1d4f82" stroke="#fff" stroke-width="3"/><g fill="none" stroke="#fff" stroke-width="2.500"><path d="M0 26V-20M0 16L-12 5v-13M0 16L12 5v-13M0 4L-6-3v-13M0 4l6-7v-13M-12 4l-7-3v-6M12 4l7-3v-6"/></g><g fill="#fff"><circle cy="-22" r="2.500"/><circle cx="-12" cy="-11" r="2.500"/><circle cx="12" cy="-11" r="2.500"/><circle cx="-20" cy="-6" r="2.500"/><circle cx="20" cy="-6" r="2.500"/><circle cx="-6" cy="-18" r="2.500"/><circle cx="6" cy="-18" r="2.500"/></g></svg>
  <svg class="run" viewBox="-38 -44 76 94"><circle cx="0" cy="27" r="6" fill="#222"/><circle cx="26" cy="11" r="8" fill="#222"/><path d="M-16-8L7-24l25-4-1 34L0 27z" fill="#9a90d6"/><path d="M-20-14L8-35l25 9L4-4z" fill="#ececec"/><path d="M-20-14L4-4v8L-16-4z" fill="#d2d2d2"/><path d="M-33-4l13-8L6-4v22L0 30l-8 3-27-13z" fill="#fbc41f"/><path d="M-31-2l11-5L0 1v11l-31-6z" fill="#55636e"/><path d="M-31 15l22 8M-31 19l22 8" stroke="#c08c10" stroke-width="2"/></svg>
  <svg viewBox="-38 -44 76 94"><circle r="33.500" fill="url(#gBall)"/><path d="M-11-30v61M11-30v61M-31-11h62M-31 11h62" stroke="#7cc0f8" stroke-width="1.500" opacity=".6"/><circle cx="-27" cy="-26" r="5" fill="#3a4f67"/></svg>
  <svg viewBox="-38 -44 76 94"><path d="M-34-16L8-28l26 12v36L2 33l-36-14z" fill="#c98f18"/><path d="M-34-16L0-8v41l-34-14z" fill="#b0760f"/><path d="M-34-16L8-28l26 12L0-8z" fill="#e5b03a"/><path d="M-30-9l25 7v25l-25-9z" fill="#f1eee3"/><path d="M-27-3l19 17M-9 0l-17 10" stroke="#a8721a" stroke-width="2.500"/><path d="M-22 1h9v9h-9z" fill="#f1eee3" stroke="#a8721a"/><path d="M2-26l20 9v28" fill="none" stroke="#222" stroke-width="4"/></svg>
  <svg viewBox="-38 -44 76 94"><path d="M-34-10l10-4 10 44-10 4z" fill="#7bc043"/><path d="M-28-20l18-8 12 50-14 8z" fill="#f39b34"/><path d="M-22-26l50-8 8 56-46 11z" fill="url(#gDash)"/><text x="5" y="14" class="dash">D</text></svg>
  <svg class="run" viewBox="-38 -44 76 94"><path d="M-30-30h56q6 0 7 6v46q0 6-6 6h-54q-6 0-6-6z" fill="#d8d8d8"/><path d="M-29-30h55l4 44h-62z" fill="#5d5d5d"/><path d="M-32 14h62v8h-62z" fill="#2a2a2a"/><text x="0" y="7" class="subl">S</text></svg>
  <span></span>
  <svg class="run" viewBox="-38 -44 76 94"><path d="M-16-33q8-2 12 2Q30-30 30 2q5 14-4 26-10 8-22 3-32 0-34-31-6-16 0-27 6-8 14-6z" fill="#1aa7e8"/><text y="17" class="sky">S</text></svg>
  <svg class="run" viewBox="-38 -44 76 94"><clipPath id="cs"><rect x="-32" y="-32" width="64" height="64" rx="6"/></clipPath><g clip-path="url(#cs)"><path d="M-32-32h64v64h-64z" fill="#fff"/><path d="M-32-32h24L-32 0z" fill="#6dc9c5"/><path d="M-32 0L-8-32H2l8 8-26 9-10 24-6 3z" fill="#5fb9a0"/><path d="M2-32h12l2 14-6 1z" fill="#3f7f5b"/><path d="M14-32h18V-6L16-18z" fill="#e9b12d"/><path d="M16-18L32-6V6L20 12z" fill="#b09a25"/><path d="M32 6v28H18l2-22z" fill="#e02030"/><path d="M20 12l-2 22H-6l-6-14z" fill="#e01e73"/><path d="M-12 20l6 14h-26V26z" fill="#4d1640"/><path d="M-32 8l8-3 12 15-20 7z" fill="#3db38f"/></g><path d="M-15-12L12-19l9 28-27 9z" fill="#fff"/><text y="12" class="slack">S</text></svg>
  <svg class="run" viewBox="-38 -44 76 94"><circle r="32" fill="#2b9bd7"/><path d="M-21 2L20-17l-8 34-11-9-6 7-1-10 16-15L-10 6z" fill="#fff"/></svg>
  <svg viewBox="-38 -44 76 94"><circle r="36" fill="#7ed63d"/><text y="10" class="up">Up</text></svg>
  <svg viewBox="-38 -44 76 94"><path d="M0-31L32-14v32L0 32l-32-14v-32z" fill="#7d6e5d"/><path d="M0-31l32 17L0 0l-32-14z" fill="#a3927e"/><path d="M0 0v32l-32-14v-32z" fill="#8e7d6a"/><path d="M-18-4l3 6h8l-6 5 3 8-8-5-7 4 3-8-6-4 7-1z" fill="#f3efe6"/></svg>
  <svg class="run" viewBox="-38 -44 76 94"><circle cx="22" cy="21" r="11" fill="none" stroke="#6a7676" stroke-width="2"/><g transform="rotate(-8)"><path d="M-24-31h48v61h-48z" fill="#f4f6f8" stroke="#f4f6f8" stroke-width="4" stroke-dasharray="3 2"/><path d="M-19-27h38v52h-38z" fill="#4a9be6"/><path d="M-19 10Q0 0 19 12v13h-38z" fill="#b9d9f2"/><path d="M-12-20q8 10 12 20 5 3 8 12l6 10-9-4q-12-4-13-14-6-10-4-24z" fill="#5a3a24"/><path d="M-2 2q-10 2-14 12 8-2 14-6z" fill="#d8c39a"/></g></svg>
  <svg class="run" viewBox="-38 -44 76 94"><path d="M-2-28q32 2 32 27T0 25q-6 0-10-2-4 6-12 7 4-6 3-11-13-6-13-21 0-24 30-26z" fill="url(#gSky)"/><path d="M14-4q20 2 20 16 0 8-7 12 0 4 2 8-6-1-9-4-24 1-26-15Q-5-3 14-4z" fill="#f4f9fd"/><g fill="#2a6db5"><circle cx="6" cy="12" r="2.800"/><circle cx="14" cy="12" r="2.800"/><circle cx="22" cy="12" r="2.800"/></g></svg>
  <span></span>
  <svg viewBox="-38 -44 76 94"><path d="M14-28l12 2v44l-12 4z" fill="#5cae4f"/><path d="M16-16l10 2v30l-10 4z" fill="#e9b13a"/><path d="M-28-28L18-33v60l-41 7z" fill="#bd9154"/><path d="M-22-28l-4 0 4 61 5-1z" fill="#9a7340"/><circle cx="-1" cy="-1" r="14" fill="none" stroke="#9d7745" stroke-width="2"/><path d="M-1-10a5 5 0 0 1 3 10q8 3 8 9h-22q0-6 8-9a5 5 0 0 1 3-10z" fill="#9d7745"/></svg>
  <svg viewBox="-38 -44 76 94"><path d="M-24-28L24-30l8 48-48 12z" fill="#6b7375"/><path d="M-29-27L20-31l6 50-47 9z" fill="#f7f7f7"/><path d="M-29-27L20-31l2 16-49 5z" fill="#e8433b"/><text x="-4" y="-15" class="mon">ЯНВ.</text><text x="0" y="17" class="day">16</text></svg>
  <svg viewBox="-38 -44 76 94"><path d="M-29-27L21-33l8 58-50 7z" fill="#f8f8f5"/><path d="M-29-27L21-33l2 12-50 7z" fill="#fcd53b"/><path d="M-25-8l49-6M-24 0l49-6M-23 8l49-6M-22 16l49-6M-21 24l49-6" stroke="#d8d8d4" stroke-width="1.500"/></svg>
  <span></span>
  <svg viewBox="-38 -44 76 94"><circle r="31" fill="#f2f2ef"/><g opacity=".88"><ellipse cy="-16" rx="8" ry="12" fill="#f79a2c"/><ellipse cy="-16" rx="8" ry="12" fill="#e3d12d" transform="rotate(45)"/><ellipse cy="-16" rx="8" ry="12" fill="#9ac845" transform="rotate(90)"/><ellipse cy="-16" rx="8" ry="12" fill="#5cb98d" transform="rotate(135)"/><ellipse cy="-16" rx="8" ry="12" fill="#70a8dc" transform="rotate(180)"/><ellipse cy="-16" rx="8" ry="12" fill="#9a82c6" transform="rotate(225)"/><ellipse cy="-16" rx="8" ry="12" fill="#cf7cab" transform="rotate(270)"/><ellipse cy="-16" rx="8" ry="12" fill="#ea5a44" transform="rotate(315)"/></g></svg>
  <svg viewBox="-38 -44 76 94"><circle r="30" fill="#fafafc" stroke="url(#gPink)" stroke-width="4"/><path d="M-6 12V-14L14-19V8" fill="none" stroke="url(#gPink)" stroke-width="4.500"/><ellipse cx="-10.500" cy="13" rx="6.500" ry="5.500" fill="#8b64f0"/><ellipse cx="9.500" cy="9" rx="6.500" ry="5.500" fill="#6a8df5"/></svg>
  <svg viewBox="-38 -44 76 94"><circle r="30" fill="url(#gOrange)" stroke="#f3ede6" stroke-width="2"/><path d="M-1-9q-10-9-20-4v27q10-4 20 3zM1-9q10-9 20-4v27q-10-4-20 3z" fill="#fff"/></svg>
  <svg viewBox="-38 -44 76 94"><circle r="30" fill="url(#gStore)" stroke="#eef2f5" stroke-width="2"/><path d="M2-19L-15 17M-3-19L15 17M-20 7h40" stroke="#fff" stroke-width="4.500" stroke-linecap="round"/><circle cx="23" cy="-23" r="13" fill="#f2433d"/><text x="23" y="-16" class="badge">5</text></svg>
  <svg viewBox="-38 -44 76 94"><path d="M-32-29h64v58h-64z" fill="#a3adb2"/><circle r="26" fill="#27292b"/><circle r="21" fill="none" stroke="#9fa4a8" stroke-width="5" stroke-dasharray="3 1.400"/><circle r="17" fill="none" stroke="#b3b8bb" stroke-width="3"/><circle r="5" fill="none" stroke="#b3b8bb" stroke-width="3"/><path d="M5 0h12M-3 4l-6 11M-3-4l-6-11" stroke="#b3b8bb" stroke-width="3"/></svg>
  <i class="sep"></i>
  <svg viewBox="-38 -44 76 94"><path d="M-31-20q0-4 3-4h17l4 4h34q4 0 4 4v40q0 3-3 3h-56q-3 0-3-3z" fill="#60bce6"/><path d="M-18-32h24l10 8v12h-34z" fill="#f3f3f3"/><path d="M-31-14h62v38q0 3-3 3h-56q-3 0-3-3z" fill="#7ed5fa"/></svg>
  <svg viewBox="-38 -44 76 94"><path d="M-25-26Q0-34 25-26L18 28Q0 36-18 28z" fill="url(#gBin)" stroke="#e7e9ea" stroke-width="1.500"/><ellipse cy="-26" rx="25" ry="6.500" fill="#a8acae" stroke="#f0f1f1" stroke-width="2"/></svg>
</footer>
</body>
</html>
```
FILE: styles.css
```
* { box-sizing: border-box; }
html, body { margin: 0; padding: 0; }
body {
  width: 2880px; height: 1800px; overflow: hidden; display: flex; flex-direction: column;
  background: #0d1615; font-family: Inter, "Liberation Sans", sans-serif; color: #1d1d1d;
}
.defs { position: absolute; width: 0; height: 0; }
svg { display: block; flex: none; }
ul, p, h2, h3 { margin: 0; padding: 0; list-style: none; font-weight: 400; }

/* ---------- menu bar ---------- */
.menubar {
  height: 44px; flex: none; display: flex; align-items: center; padding-left: 42px;
  background: linear-gradient(90deg, #f0f4f6 0, #e6eef5 25%, #e9eff5 50%, #e9eef6 100%);
  font-size: 27px; color: #32383e; white-space: nowrap;
}
.apple { width: 26px; height: 32px; margin: -3px 40px 0 0; }
.menus { display: flex; gap: 38.100px; flex: none; width: 1682px; letter-spacing: -.1px; }
.menus b { font-size: 28px; line-height: 33px; font-weight: 700; }
.status-icons { width: 570px; height: 44px; }
.percent { margin-left: 13px; width: 76px; font-size: 26px; letter-spacing: -1.700px; }
.battery { width: 46px; height: 26px; }
.flag { width: 32px; height: 22px; margin-left: 31px; }
.clock { margin-left: 26px; width: 153px; letter-spacing: .1px; }
.spot { width: 30px; height: 30px; }
.list { width: 36px; height: 22px; margin-left: 31px; }
.bolt { font: 700 22px Inter, sans-serif; fill: #e8eef5; }

/* ---------- window ---------- */
.window {
  height: 1658px; flex: none; margin: 2px 0; border-radius: 10px; overflow: hidden; position: relative;
  background: #f1f1f1; box-shadow: 0 0 0 2px #05080b;
}
.window::after {
  content: ""; position: absolute; left: 0; right: 0; bottom: 0; height: 64px; pointer-events: none;
  background: linear-gradient(rgba(0,0,0,0), rgba(0,0,0,.08));
}
.titlebar {
  height: 44px; display: flex; align-items: center; gap: 16px; padding-left: 16px;
  background: linear-gradient(#f4f3f4 0, #e9e7e9 3px, #e2e0e2);
}
.light { width: 24px; height: 24px; border-radius: 50%; border: 1px solid rgba(0,0,0,.12); }
.red { background: #fc5b57; } .amber { background: #fdbd41; } .green.light { background: #34c84a; }
.doc-title { margin-left: 1168px; display: flex; align-items: center; font-size: 25.600px; color: #3b3b3b; }
.doc { width: 24px; height: 32px; margin-right: 11px; }
.doc-title span { width: 243px; }
.doc-chev { width: 16px; height: 9px; }

.toolbar {
  height: 94px; padding: 6px 0 0 17.5px; display: flex; align-items: flex-start;
  background: linear-gradient(#e2e0e2, #d1cfd2); border-bottom: 2px solid #a8a8a8;
}
.tool { display: flex; flex-direction: column; align-items: center; flex: none; color: #838284; }
.tool.on { color: #1b1b1b; }
.tool svg { width: 60px; height: 48px; margin: 0 -30px; }
.tool span { font-size: 20.200px; line-height: 24px; margin-top: 5px; white-space: nowrap; }
.t-insert { width: 56px; }
.t-group { width: 58px; margin-left: 98px; }
.t-ungroup { width: 84px; margin-left: 17px; }
.t-symbol { width: 142px; margin-left: 93.5px; }
.t-zoom { width: 104px; margin-left: 106px; }
.tool.t-zoom svg { width: 104px; margin: 0; }
.t-edit { width: 38px; margin-left: 110.5px; }
.t-transform { width: 98px; margin-left: 22.5px; }
.t-rotate { width: 64px; margin-left: 17px; }
.t-flatten { width: 66px; margin-left: 16.5px; }
.t-mask { width: 50px; margin-left: 97px; }
.t-scale { width: 54px; margin-left: 16.5px; }
.t-union { width: 56px; margin-left: 94.5px; }
.t-subtract { width: 84px; margin-left: 15.5px; }
.t-intersect { width: 86px; margin-left: 16px; }
.t-difference { width: 102px; margin-left: 16px; }
.t-forward { width: 80px; margin-left: 93.5px; }
.t-backward { width: 94px; margin-left: 17.5px; }
.t-mirror { width: 60px; margin-left: 93px; }
.t-cloud { width: 56px; margin-left: 17.5px; }
.t-view { width: 48px; margin-left: 102.5px; }
.t-layout { width: 124px; margin-left: 22px; }
.t-export { width: 64px; margin-left: 96px; }

.body { height: 1520px; display: flex; }

/* ---------- sidebar ---------- */
.sidebar { width: 420px; flex: none; border-right: 2px solid #b4b4b4; background: #f3f3f3; font-size: 22px; display: flex; flex-direction: column; }
.head { height: 54px; flex: none; display: flex; align-items: center; justify-content: space-between; padding: 0 15px 0 20px; border-bottom: 2px solid #b5b5b5; color: #000; }
.head svg { width: 24px; height: 24px; }
.head .collapse { width: 26px; height: 23px; margin-right: -3px; }
.head.dim { color: #7d7d7d; border-top: 2px solid #b5b5b5; height: 55px; padding-top: 2px; }
.scroller { display: flex; overflow: hidden; }
.scroller ul { width: 388px; }
.scroller li { height: 54px; line-height: 55px; padding-left: 54px; background: #ebebeb; white-space: nowrap; color: #222; }
.scroller li:nth-child(even) { background: #f0f0f0; }
.scroller li.sel { background: #6d9de1; color: #fff; }
.pages { height: 961px; flex: none; }
.pages li:nth-child(1) { height: 54.500px; }
.track { flex: 1; background: #fafafa; border-left: 2px solid #e8e8e8; padding: 6px; }
.track i { display: block; width: 16px; height: 767px; border-radius: 8px; background: #c1c1c1; }
.layers { flex: 1; min-height: 0; }
.layers .track i { height: 36px; }
.layers li { display: flex; align-items: center; padding: 0; line-height: 56px; }
.layers li.root { background: #fafafa; border-bottom: 1px solid #9a9a9a; padding-left: 16px; }
.tri { border: 12px solid transparent; border-bottom: 0; border-top-color: #9b9b9b; margin-right: 13.500px; }
.l1 { justify-content: flex-start; }
.layers .l1 { padding-left: 90px; }
.layers .l1.dir { padding-left: 48px; }
.rule { width: 28px; height: 2px; background: #999; margin-right: 15.500px; }
.dir .tri { margin-right: 17px; }
.dir svg { width: 30px; height: 26px; margin-right: 14.500px; }
.layers .l2 { padding-left: 121px; }
.l2 em { font-style: normal; color: #9d9d9d; width: 45px; }
.foot { height: 62px; flex: none; border-top: 1px solid #b9b9b9; display: flex; align-items: center; background: #f3f3f3; color: #3e8ef0; }
.filter { width: 282px; height: 36px; margin-left: 9px; border: 2px solid #bcbcbc; border-radius: 6px; background: #fbfbfb; color: #b2b2b2; display: flex; align-items: center; justify-content: flex-start; padding-left: 80px; gap: 10px; }
.filter svg { width: 22px; height: 22px; }
.copies { width: 24px; height: 24px; margin-left: 27px; }
.knife { width: 24px; height: 26px; margin: 0 6px 0 8px; }
.foot b { font-weight: 600; font-size: 19.500px; }

/* ---------- canvas ---------- */
.canvas { flex: 1; position: relative; overflow: hidden; background: #f1f1f1; }
/* layer coordinates are screen coordinates; the canvas starts at 420,184 */
.layer { position: absolute; left: -420px; top: -184px; width: 2880px; height: 1800px; font: 14.800px/20px Roboto, "Noto Sans", sans-serif; color: #666; white-space: nowrap; }
.layer > * { position: absolute; }
.m { font-weight: 500; }
a { color: #21a6f4; font-weight: 400; text-decoration: underline; }
.green { color: #29b83c; }
.blue { color: #21a6f4; }
.ab-name { font: 22.300px/26px Inter, sans-serif; color: #8f918f; top: 222px; }
.n1 { left: 651px; } .n2 { left: 2304.500px; }
.artboard { background: #fff; box-shadow: 0 1px 7px rgba(0,0,0,.28); }
.ab1 { left: 646px; top: 256px; width: 1524px; height: 1500px; }
.ab2 { left: 2300px; top: 256px; width: 400px; height: 1362px; }

.product { left: 688.500px; top: 299px; width: 761px; height: 120px; background: #fff; border: 1px solid #e0e0e0; border-radius: 3px; box-shadow: 0 2px 4px rgba(0,0,0,.2); display: flex; align-items: flex-start; font-size: 12.700px; line-height: 21px; }
.product::after { content: ""; position: absolute; left: 693.500px; top: 109px; width: 19px; height: 19px; background: linear-gradient(135deg, transparent 50%, #fff 50%); transform: rotate(45deg); box-shadow: 2px 2px 2px rgba(0,0,0,.14); }
.p-info { width: 19px; height: 19px; color: #ccc; margin: 51px 0 0 20px; }
.p-text, .p-stock, .p-price { display: flex; flex-direction: column; }
.p-text { margin: 15px 0 0 10px; width: 254px; align-items: flex-start; }
.lite { font-weight: 400; color: #999; }
.p-stock { margin-top: 28px; width: 83px; }
.off { color: #ccc; }
.p-price { margin-top: 36px; width: 164px; }
.p-price b { font-size: 18.800px; font-weight: 500; line-height: 23px; }
.p-price span { line-height: 23px; }
.product .stepper { margin-top: 46px; }
.product .btn { margin: 42px 0 0 21px; height: 36px; z-index: 1; }
.stepper { width: 115px; height: 29px; display: flex; border: 2px solid #e2e2e2; border-radius: 3px; line-height: 27px; font-size: 14px; color: #777; }
.stepper > * { position: relative; width: 34px; }
.stepper span { width: 47px; padding-left: 10.500px; border: solid #e2e2e2; border-width: 0 2px; line-height: 25px; }
.minus::before, .plus::before, .plus::after { content: ""; position: absolute; left: 11px; top: 11.500px; width: 11px; height: 2px; background: #999; }
.plus::after { transform: rotate(90deg); }
.both .minus, .both .plus { width: 36px; margin: -2px; border: 2px solid #29b83c; height: 29px; }
.both span { border-color: transparent; width: 47px; }
.edit span { margin: -2px 0; border: 2px solid #21a6f4; height: 29px; }
.close { left: 1449px; width: 32px; height: 32px; background: #ccc; }
.x1 { top: 304px; } .x2 { top: 346px; background: #949494; }
.close i::before, .close i::after { content: ""; position: absolute; left: 6.500px; top: 15px; width: 20px; height: 2px; background: #fff; transform: rotate(45deg); }
.close i::after { transform: rotate(-45deg); }

.row { left: 688.500px; display: flex; gap: 21px; }
.btn { height: 36.500px; background: #29b83c; border-radius: 2px; color: #fff; font-weight: 500; display: flex; align-items: center; justify-content: center; padding-top: 1px; }
.r1 { top: 456px; } .r1 .btn { height: 42.500px; }
.r2 { top: 519.500px; } .r3 { top: 576.500px; } .r4 { top: 634px; } .r5 { top: 691px; }
.r6 { top: 748.500px; } .row.r1 .w82 { margin-right: 1px; }
.w92 { width: 92.500px; } .w82 { width: 82px; } .w100 { width: 100.500px; } .w84 { width: 83.500px; } .w74 { width: 74.500px; } .w76 { width: 76px; } .w68 { width: 68px; }
.hov { background: #22d53b; } .dis { background: #8eea9d; color: #e4fae7; }
.g1 { background: #999; color: #eee; } .g2 { background: #808080; } .g3 { background: #ccc; color: #f2f2f2; }
.icon { width: 53px; } .icon svg { width: 20px; height: 20px; } .icon .tk { height: 16px; }
.line { background: #fff; border: 2px solid #e2e2e2; color: #666; font-size: 12.700px; padding: 0; }
.act { border-color: #29b83c; } .fade { border-color: #eee; color: #ccc; }

.field { left: 1146px; width: 338.500px; height: 42px; border: 2px solid #e2e2e2; border-radius: 3px; background: #fff; padding: 1px 0 0 15px; line-height: 38px; display: flex; align-items: center; }
.ph { color: #999; }
.focus { border-color: #21a6f4; }
.err { border-color: #ff7575; }
.f1 { top: 456.500px; } .f2 { top: 509px; } .f3 { top: 562px; padding-top: 2px; }
.f3 svg { width: 21px; height: 21px; color: #ff7575; margin: 0 9px 0 auto; }
.err-msg { left: 1146px; top: 611px; font-size: 12.700px; color: #f33; }
.checks { display: flex; flex-direction: column; font-size: 10.580px; top: 662.500px; }
.checks span { height: 19px; margin-bottom: 11.750px; display: flex; align-items: center; gap: 5px; }
.c-box { left: 1146px; } .c-radio { left: 1315.500px; }
.checks i, .opts i { width: 19px; height: 19px; border: 2px solid #ccc; border-radius: 2px; display: flex; align-items: center; justify-content: center; color: #29b83c; }
.checks i svg, .opts i svg { width: 11px; height: 9px; }
.c-radio i { border-radius: 50%; }
.checks .h i { border-color: #21a6f4; }
.checks .d { color: #ccc; }
.checks .d i { border-color: #e4e4e4; color: #ccc; }
.k i::before { content: ""; width: 10px; height: 10px; border-radius: 50%; background: #29b83c; }
.d.k i::before { background: #ccc; }

.tabs { left: 1537px; top: 299px; display: flex; }
.tabs .on { width: 95px; height: 36px; text-align: center; color: #29b83c; border-bottom: 4px solid #29b83c; padding-left: 1px; margin-right: 21.500px; }
.tabs span:nth-child(2) { width: 241px; }
.tabs .green { width: 162px; }
.basket { display: flex; } .basket svg { width: 19px; height: 19px; margin-right: 5.500px; }
.account { right: 762.500px; display: flex; align-items: center; gap: 6.500px; }
.account svg, .drop svg, .dd svg, .filters svg { width: 10px; height: 6px; }
.a1 { top: 376px; } .a2 { top: 408px; } .a3 { top: 440px; } .a4 { top: 641px; }

.pop { background: #fff; border: 1px solid #e0e0e0; border-radius: 3px; font-size: 13.760px; }
.pop::before { content: ""; position: absolute; top: -4.500px; left: var(--tip); width: 8px; height: 8px; background: #fff; border: solid #e0e0e0; border-width: 1px 0 0 1px; transform: rotate(45deg); }
.pop span, .pop p { display: block; }
.menu { left: 1915.500px; width: 213px; --tip: 192px; padding-top: 11px; }
.menu span { line-height: 31.600px; padding-left: 21.500px; }
.hl { background: #ebebeb; }
.m1 { top: 464px; height: 148.500px; } .m2 { top: 665px; height: 116.500px; }

.under { left: 1532px; width: 275px; height: 28px; border-bottom: 2px solid #ccc; display: flex; justify-content: space-between; padding-left: 1px; }
.under svg, .field i svg { width: 19px; height: 19px; color: #999; }
.under.focus { border-color: #21a6f4; }
.u1 { top: 467.500px; } .u2 { top: 520.500px; } .u3 { top: 573.500px; } .u4 { left: 1332.500px; top: 897.500px; }
.hot svg, .field .hot svg { color: #21a6f4; }
.search { left: 1532.500px; }
.search i { margin-left: auto; height: 32px; width: 41px; border-left: 1px solid #ebebeb; display: flex; align-items: center; padding-left: 10px; padding-bottom: 2px; }
.s1 { top: 640.500px; } .s2 { top: 693px; } .s3 { top: 746px; } .s4 { left: 1646.500px; top: 883.500px; }

.carbar { left: 689px; display: flex; align-items: center; font-size: 12.700px; height: 32px; }
.b1 { top: 892px; } .b2 { top: 944px; }
.b2 a { text-decoration: none; }
.st { width: 16px; height: 16px; margin: -4px 12.500px 0 0; } .cr { width: 19px; height: 17px; margin: -2px 6px 0 0; }
.nm { width: 121px; } .carbar a { width: 81px; }
.dd { border-left: 1px solid #ddd; height: 32px; display: flex; align-items: center; gap: 6px; padding-left: 22px; width: 155.500px; }
.dd + .dd { padding-left: 20px; }
.drop { display: flex; align-items: center; gap: 6px; font-size: 12.700px; left: 702px; }
.d1 { top: 1028px; } .d2 { top: 1207.500px; }
.hist { left: 701px; width: 433px; height: 127px; padding: 17px 20px 0 21px; --tip: 11px; }
.h1 { top: 1057.500px; } .h2 { top: 1237.500px; padding-top: 18px; }
.hist p { display: flex; justify-content: space-between; line-height: 31.600px; }
.hist small { font-size: 12.700px; color: #999; }

.vin { left: 1269px; top: 940px; width: 338px; height: 145.500px; --tip: 318px; }
.vin p { display: flex; justify-content: space-between; padding: 0 20px 0 21px; line-height: 31.500px; }
.vin .th { height: 54px; line-height: 54px; border-bottom: 1px solid #e8e8e8; font-size: 10.600px; font-weight: 500; color: #333; margin-bottom: 16px; }
.codes { left: 1646.500px; top: 942.500px; width: 338.500px; height: 127px; padding: 16px 21.500px; line-height: 31.800px; --tip: 317px; }
.filters { left: 1269px; top: 1149px; height: 21px; line-height: 22px; display: flex; font-size: 12.700px; }
.filters span { display: flex; align-items: center; gap: 7px; width: 90px; }
.filters .m { border-left: 1px solid #ddd; padding-left: 10.500px; width: auto; }
.filters .dot { width: 161px; padding-left: 10px; gap: 6.500px; }
.filters .dot::before { content: ""; width: 7px; height: 7px; border-radius: 50%; background: #29b83c; }
.where { left: 1306px; top: 1176.500px; width: 213.500px; height: 185px; --tip: 192px; }
.where .acts { height: 48px; border-bottom: 1px solid #e4e4e4; padding: 0 0 1px 20px; display: flex; align-items: center; gap: 21px; }
.opts { padding: 10px 0 0 21px; }
.opts span { display: flex; align-items: center; gap: 10px; height: 20px; margin-bottom: 11.700px; }

.dialog { top: 1411.500px; width: 423px; height: 173.500px; background: #fff; border: 1px solid #e9e9e9; border-radius: 2px; box-shadow: 0 2px 4px rgba(0,0,0,.18); }
.g-a { left: 701px; } .g-b { left: 1177px; } .g-c { left: 1653px; }
.say { height: 93px; border-bottom: 1px solid #e8e8e8; display: flex; padding: 28px 0 0 23px; font-size: 12.700px; line-height: 17.500px; color: #999; }
.say svg { width: 38px; height: 38px; margin-top: -1px; } .say .warn { width: 45px; margin: -1px -5px 0 -3px; } .say .inf { color: #21a6f4; }
.say p { margin: 2px 0 0 14px; }
.g-a .say p { margin-left: 15px; }
.say b { display: block; color: #666; font-size: 14.800px; font-weight: 500; }
.dialog .acts { display: flex; justify-content: center; gap: 11px; padding-top: 22px; }
.dialog .btn { width: 185px; height: 36px; padding: 0; }

.modal { left: 2372px; width: 300px; background: #fff; border: 1px solid #eee; border-radius: 3px; font-size: 12.700px; }
.o1 { top: 312px; height: 485px; } .o2 { top: 905px; height: 579px; }
.modal h3 { font-size: 20.500px; line-height: 69px; padding-left: 21px; }
.tab { height: 54px; line-height: 55px; background: #f6f6f6; padding-left: 21px; font-size: 14.300px; }
.tab.on { color: #29b83c; position: relative; }
.o2 .tab { line-height: 53px; }
.tab.on::after { content: ""; position: absolute; left: 21px; right: 0; bottom: 0; height: 4px; background: #29b83c; }
.modal p { margin-left: 22px; padding-left: 21px; height: 53px; line-height: 51px; }
.modal .key { margin: 20px 0 1px 21px; height: 56px; line-height: 51px; border: solid #e8e8e8; border-width: 1px 0; color: #444; }
.modal .alt { background: #f8f8f8; }
.dim-h { width: 40px; height: 124px; margin: 198px 0 0 46.500px; }
.dim-t { font: 19px "Liberation Sans", sans-serif; fill: #000; }

.hand { width: 17px; height: 21px; filter: drop-shadow(0 1px 1px rgba(0,0,0,.35)); }
.k1 { left: 1464.500px; top: 366px; } .k2 { left: 845px; top: 768px; } .k3 { left: 926px; top: 768px; }
.k4 { left: 1984.500px; top: 307px; } .k5 { left: 2075px; top: 419px; } .k6 { left: 2095px; top: 522px; }
.k7 { left: 1797px; top: 590px; } .k8 { left: 1849px; top: 778px; } .k9 { left: 692.500px; top: 962px; }
.k10 { left: 897.500px; top: 962px; } .k11 { left: 1168.500px; top: 962px; }

/* ---------- inspector ---------- */
.inspector { width: 428px; flex: none; border-left: 2px solid #b4b4b4; background: #e5e5e5; font-size: 21.800px; color: #000; }
.align { height: 54px; background: #f5f5f5; border-bottom: 2px solid #b8b8b8; }
.align svg { width: 426px; height: 52px; }
.in { display: block; width: 116px; height: 36px; background: #fff; border: 1px solid #b5b5b5; }
.props { height: 231px; padding: 17px 0 0 15px; display: grid; grid-template-columns: 126px 116px 34px 116px; grid-auto-rows: 70.300px; }
.props label { line-height: 37px; }
.props small { display: block; text-align: center; font-size: 18.500px; line-height: 29px; }
.props .low { line-height: 34px; }
.lock { width: 13px; height: 18px; margin: 7px 0 0 10px; }
.flip { display: block; height: 36px; border: 1px solid #bdbdbd; border-radius: 6px; background: #f3f3f3; }
.flip svg { width: 114px; height: 34px; }
.blend { height: 129.500px; padding: 16px 0 0 15px; border-top: 2px solid #bdbdbd; border-image: linear-gradient(90deg, #b5b5b5 30%, #e5e5e5 95%) 1; }
.opacity, .mode { display: flex; align-items: center; }
.blend label { width: 126px; }
.slider { width: 161px; height: 6px; border-radius: 3px; background: #cbcbcb; margin-right: 21px; display: flex; align-items: center; }
.slider i { width: 23px; height: 23px; border-radius: 50%; background: #fafafa; border: 1px solid #c2c2c2; }
.opacity .in { width: 84px; }
.mode { margin-top: 17px; }
.select { width: 266px; height: 40px; border: 1px solid #c3c3c3; border-radius: 6px; background: #f2f2f2; color: #808080; display: flex; align-items: center; justify-content: space-between; padding: 0 8px 0 17px; }
.select svg { width: 16px; height: 24px; }
.sect { height: 52.100px; border-top: 2px solid; border-image: linear-gradient(90deg, #b5b5b5 30%, #e5e5e5 95%) 1; padding-left: 15px; line-height: 51px; font-weight: 700; font-size: 22.400px; color: #4d4d4d; }
.last { display: flex; align-items: center; height: 54px; border-bottom: 2px solid; }
.last svg { width: 14px; height: 20px; margin-left: 14px; }
.last i { width: 24px; height: 24px; border: 1px solid #bbb; border-radius: 5px; background: #f3f3f3; margin: 0 18px 0 auto; }

/* ---------- dock ---------- */
.dock { height: 94px; margin: 0 58px; padding-left: 6.300px; flex: none; display: flex; border-radius: 10px 10px 0 0; background: linear-gradient(90deg, #535855, #59605f 30%, #55605c 60%, #565a59); }
.dock > svg, .dock > span { width: 75.460px; height: 94px; flex: none; overflow: visible; position: relative; }
.run { background: radial-gradient(circle 4px at 50% 86px, #000 3.500px, transparent 4px); }
.sep { flex: none; width: 34.600px; background: linear-gradient(#343a39, #343a39) center 12px / 2px 69px no-repeat; }
.dock text { text-anchor: middle; }
.ad { font: 500 35px Inter, sans-serif; } .ps { fill: #37c8f4; } .ai { fill: #f8a032; }
.dock .storm { font: 700 22px Inter, sans-serif; fill: #fff; text-anchor: start; }
.dock .term { font: 700 20px "Liberation Mono", monospace; fill: #25b31f; text-anchor: start; }
.dash { font: italic 800 38px Inter, sans-serif; fill: #fff; }
.subl { font: 800 36px Inter, sans-serif; fill: #fa9d2f; }
.sky { font: 700 48px Inter, sans-serif; fill: #fff; }
.slack { font: 700 34px Inter, sans-serif; fill: #4a2146; }
.up { font: 600 36px Inter, sans-serif; fill: #fff; }
.mon { font: 500 13px Inter, sans-serif; fill: #fff; }
.day { font: 400 30px Inter, sans-serif; fill: #333; }
.badge { font: 400 19px Inter, sans-serif; fill: #fff; }
```
